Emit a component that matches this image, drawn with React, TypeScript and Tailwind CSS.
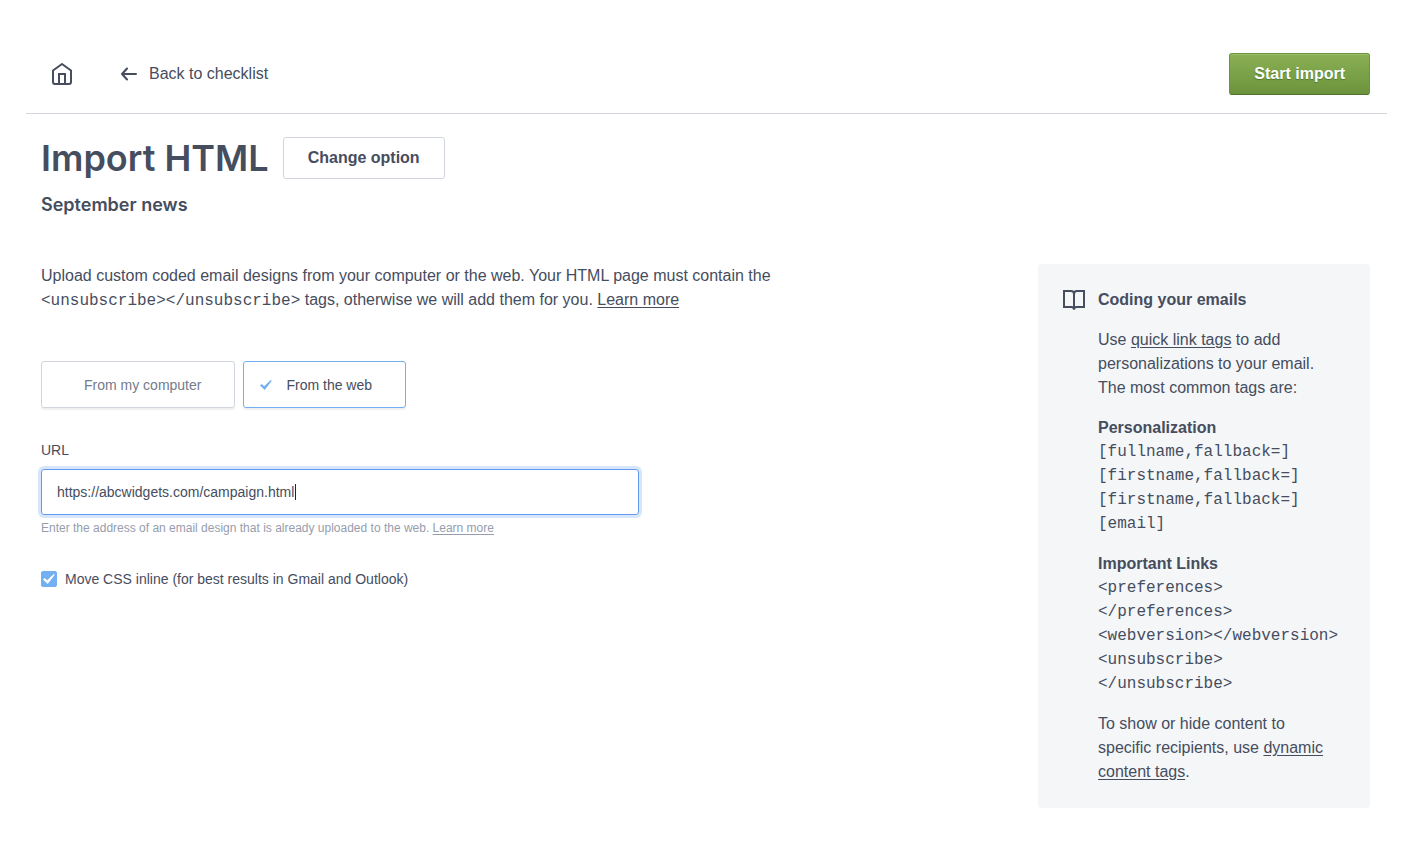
import { useState } from 'react';

const linkClass = 'underline underline-offset-2';

function HomeIcon() {
  return (
    <svg width="22" height="24" viewBox="0 0 22 24" fill="none" stroke="currentColor" strokeWidth="2" strokeLinejoin="round">
      <path d="M2 8.500 11 2l9 6.500V20a2 2 0 0 1-2 2H4a2 2 0 0 1-2-2z" />
      <path d="M8 22V12h6v10" strokeLinejoin="miter" />
    </svg>
  );
}

function BackIcon() {
  return (
    <svg width="16" height="14" viewBox="0 0 16 14" fill="none" stroke="currentColor" strokeWidth="2" strokeLinecap="round" strokeLinejoin="round">
      <path d="M15 7H1M6 1.500 1 7l5 5.500" />
    </svg>
  );
}

function BookIcon() {
  return (
    <svg className="shrink-0" width="24" height="24" viewBox="0 0 24 24" fill="none" stroke="currentColor" strokeWidth="2">
      <path d="M2 3h7c1.800 0 3 1.200 3 3v15.500c0-1.700-1-2.500-2.500-2.500H2z" />
      <path d="M22 3h-7c-1.800 0-3 1.200-3 3v15.500c0-1.700 1-2.500 2.500-2.500H22z" />
    </svg>
  );
}

function TickIcon() {
  return (
    <svg width="12" height="10" viewBox="0 0 12 10" fill="currentColor">
      <path d="M0 5.600 1.600 4l2.600 2.300L10.800 0l1 .8L4.700 10z" />
    </svg>
  );
}

export default function App() {
  const [source, setSource] = useState('web');
  const [url, setUrl] = useState('https://abcwidgets.com/campaign.html');
  const [inline, setInline] = useState(true);

  const options = [
    { id: 'computer', label: 'From my computer' },
    { id: 'web', label: 'From the web' },
  ];

  return (
    <div className="bg-white pt-[53px] pr-[27px] pb-12 pl-[26px] text-base text-[#464d5e] [font-family:'Liberation_Sans',Arial,sans-serif]">
      <header className="flex items-center justify-between border-b border-[#d3d6dd] pr-[17px] pb-[18px] pl-[25px]">
        <nav className="flex items-center gap-12">
          <a href="#home" aria-label="Home">
            <HomeIcon />
          </a>
          <a href="#checklist" className="flex items-center gap-3">
            <BackIcon />
            Back to checklist
          </a>
        </nav>
        <button
          type="button"
          className="h-[42px] rounded-[3px] border border-[#6a9440] border-b-[#4d7428] bg-linear-to-b from-[#8bb055] to-[#6c933c] px-6 font-bold text-white shadow-[inset_0_1px_0_#9cc168] text-shadow-[0_1px_1px_#4d7428]"
        >
          Start import
        </button>
      </header>

      <main className="pr-[17px] pl-[15px]">
        <div className="mt-[23px] flex items-center gap-[14px]">
          <h1 className="text-4xl font-semibold [font-family:Inter,sans-serif]">Import HTML</h1>
          <button type="button" className="h-[42px] rounded-[3px] border border-[#d1d5df] px-6 font-bold">
            Change option
          </button>
        </div>
        <h2 className="mt-3 text-lg leading-7 font-semibold [font-family:Inter,sans-serif]">September news</h2>

        <div className="mt-[45px] flex items-start justify-between gap-12">
          <div className="max-w-[760px] grow">
            <p className="leading-6">
              Upload custom coded email designs from your computer or the web. Your HTML page must contain the{' '}
              <code className="[font-family:'Liberation_Mono',monospace]">&lt;unsubscribe&gt;&lt;/unsubscribe&gt;</code> tags,
              otherwise we will add them for you.{' '}
              <a href="#learn" className={linkClass}>
                Learn more
              </a>
            </p>

            <div className="mt-12 flex gap-2 text-sm">
              {options.map((option) => (
                <button
                  key={option.id}
                  type="button"
                  aria-pressed={source === option.id}
                  onClick={() => setSource(option.id)}
                  className={`flex h-[47px] items-center rounded-[3px] border pr-[33px] pl-4 shadow-[0_2px_1px_#eeeff1] ${
                    source === option.id ? 'border-[#72aff3] text-[#464d5e]' : 'border-[#d1d5df] text-[#747b8c]'
                  }`}
                >
                  <span className="w-[26px] text-[#72aff3]">{source === option.id && <TickIcon />}</span>
                  {option.label}
                </button>
              ))}
            </div>

            <label htmlFor="url" className="mt-8 block text-sm leading-5">
              URL
            </label>
            <div className="relative mt-[9px] max-w-[598px]">
              <input
                id="url"
                type="text"
                value={url}
                onChange={(e) => setUrl(e.target.value)}
                className="h-[46px] w-full rounded-[3px] border border-[#639bec] px-[15px] text-sm ring-3 ring-[#d8e6fb] outline-none"
              />
              <span className="absolute top-[15px] left-[254px] h-4 w-px bg-[#1f2430]" />
            </div>
            <p className="mt-1 text-xs leading-[18px] text-[#969dad]">
              Enter the address of an email design that is already uploaded to the web.{' '}
              <a href="#learn-url" className={linkClass}>
                Learn more
              </a>
            </p>

            <label className="mt-8 flex items-center gap-2 text-sm leading-5">
              <span className="relative flex">
                <input
                  type="checkbox"
                  checked={inline}
                  onChange={(e) => setInline(e.target.checked)}
                  className="size-4 appearance-none rounded-xs border border-[#72aff3] checked:bg-[#72aff3]"
                />
                {inline && (
                  <span className="pointer-events-none absolute inset-0 flex items-center justify-center text-white">
                    <TickIcon />
                  </span>
                )}
              </span>
              Move CSS inline (for best results in Gmail and Outlook)
            </label>
          </div>

          <aside className="flex w-[332px] shrink-0 gap-3 rounded-[3px] bg-[#f4f6f8] py-6 pr-8 pl-6 leading-6">
            <BookIcon />
            <div className="flex min-w-0 flex-col gap-4">
              <h3 className="font-bold">Coding your emails</h3>
              <p>
                Use{' '}
                <a href="#quick-tags" className={linkClass}>
                  quick link tags
                </a>{' '}
                to add personalizations to your email. The most common tags are:
              </p>
              <div>
                <h4 className="font-bold">Personalization</h4>
                <code className="block whitespace-nowrap [font-family:'Liberation_Mono',monospace]">
                  [fullname,fallback=]
                  <br />
                  [firstname,fallback=]
                  <br />
                  [firstname,fallback=]
                  <br />
                  [email]
                </code>
              </div>
              <div>
                <h4 className="font-bold">Important Links</h4>
                <code className="block whitespace-nowrap [font-family:'Liberation_Mono',monospace]">
                  &lt;preferences&gt;
                  <br />
                  &lt;/preferences&gt;
                  <br />
                  &lt;webversion&gt;&lt;/webversion&gt;
                  <br />
                  &lt;unsubscribe&gt;
                  <br />
                  &lt;/unsubscribe&gt;
                </code>
              </div>
              <p>
                To show or hide content to specific recipients, use{' '}
                <a href="#dynamic" className={linkClass}>
                  dynamic content tags
                </a>
                .
              </p>
            </div>
          </aside>
        </div>
      </main>
    </div>
  );
}
